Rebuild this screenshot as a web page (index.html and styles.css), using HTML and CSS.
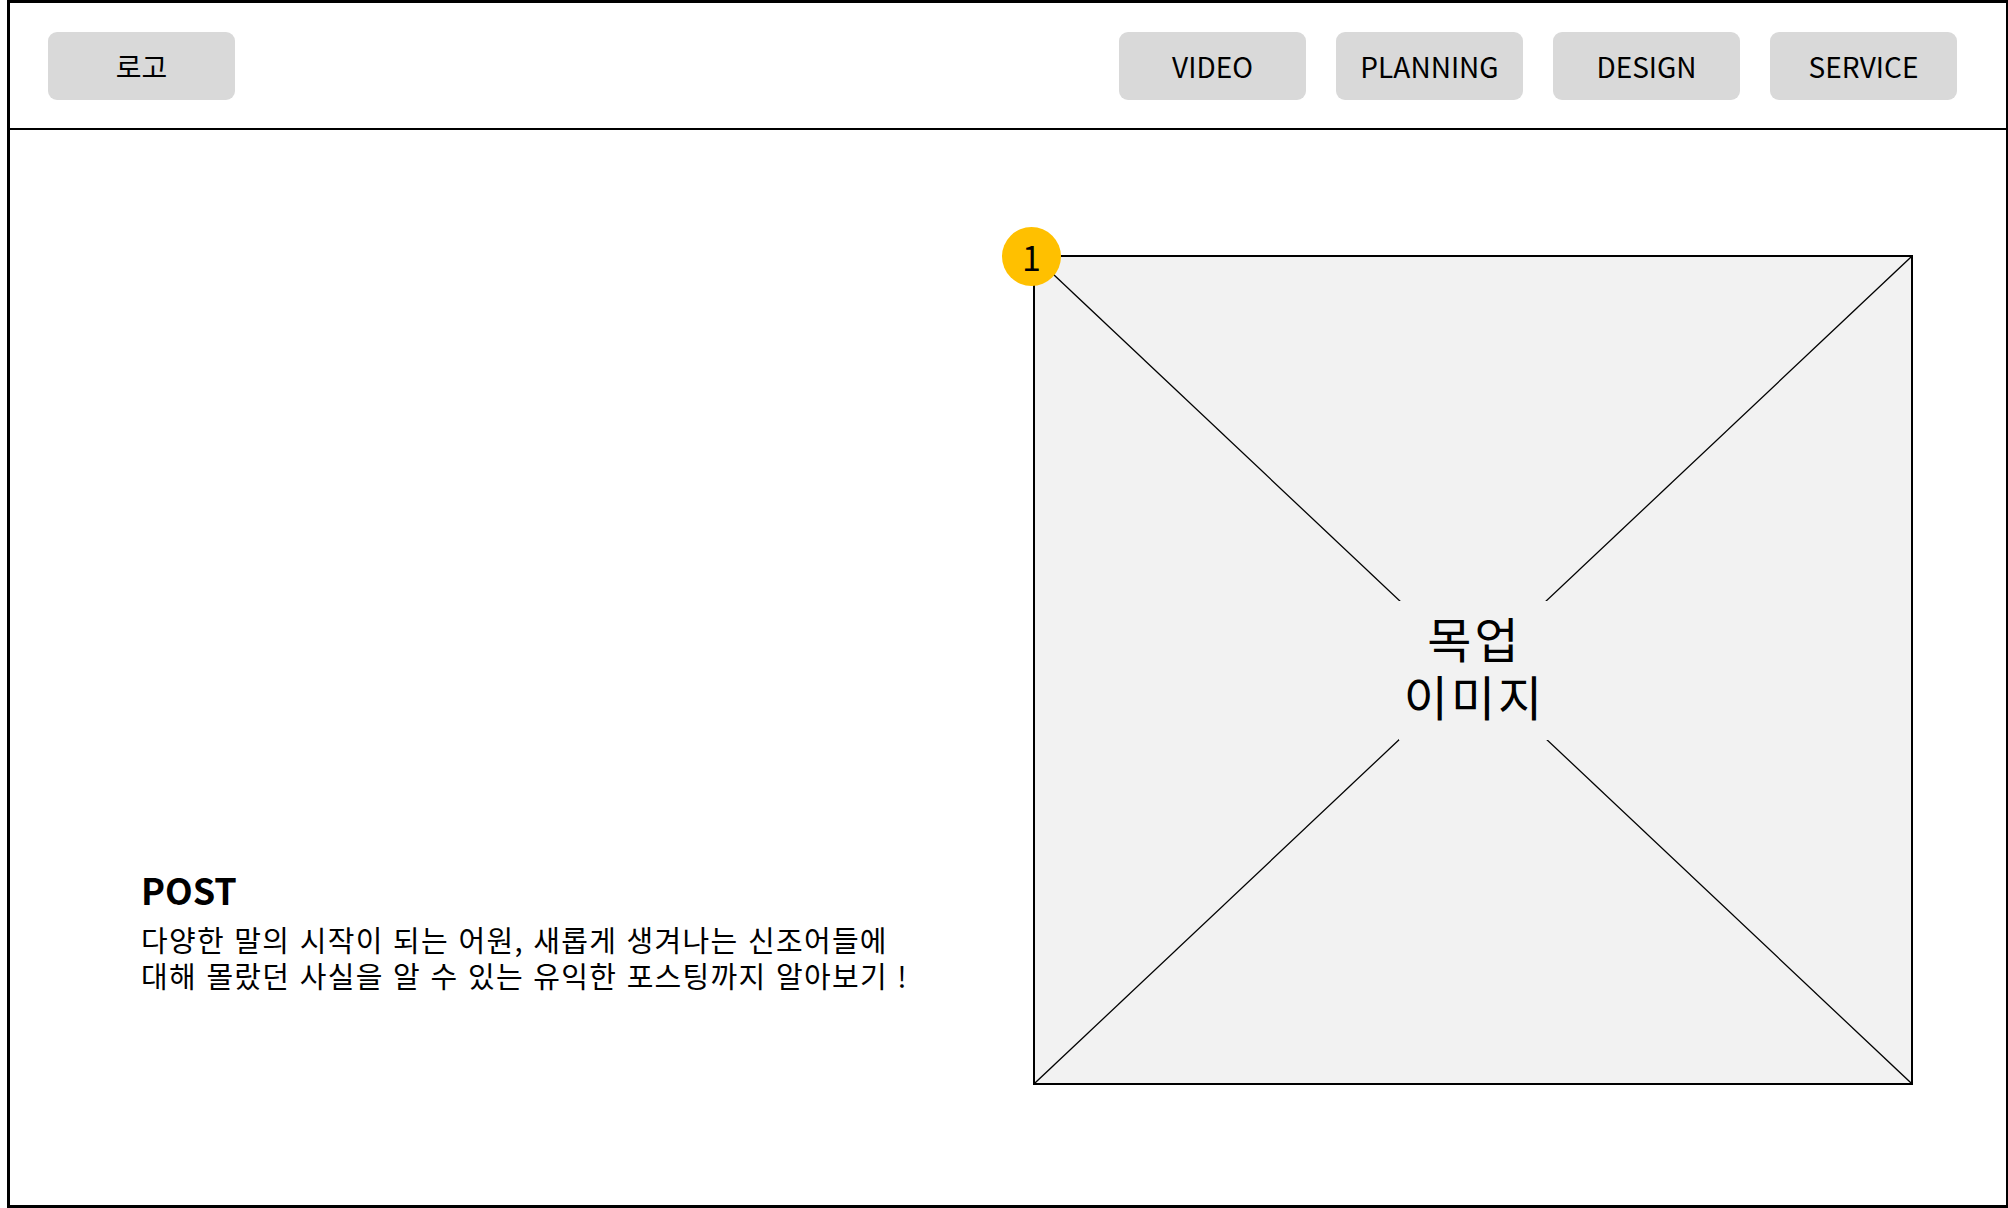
FILE: index.html
```html
<!DOCTYPE html>
<html lang="ko">
<head>
    <meta charset="UTF-8">
    <meta name="viewport" content="width=device-width, initial-scale=1.0">
    <title>POST</title>
    <link rel="stylesheet" href="styles.css">
</head>
<body>
    <div class="frame">
        <header class="header">
            <div class="btn logo">로고</div>
            <nav class="nav">
                <div class="btn">VIDEO</div>
                <div class="btn">PLANNING</div>
                <div class="btn">DESIGN</div>
                <div class="btn">SERVICE</div>
            </nav>
        </header>
        <main class="main">
            <section class="intro">
                <h2 class="intro-title">POST</h2>
                <p class="intro-text">다양한 말의 시작이 되는 어원, 새롭게 생겨나는 신조어들에<br>대해 몰랐던 사실을 알 수 있는 유익한 포스팅까지 알아보기 !</p>
            </section>
            <div class="mockup">
                <svg class="mockup-lines" viewBox="0 0 100 100" preserveAspectRatio="none">
                    <line x1="0" y1="0" x2="100" y2="100" vector-effect="non-scaling-stroke"/>
                    <line x1="100" y1="0" x2="0" y2="100" vector-effect="non-scaling-stroke"/>
                </svg>
                <div class="mockup-label">목업<br>이미지</div>
                <span class="badge">1</span>
            </div>
        </main>
    </div>
</body>
</html>
```

FILE: styles.css
```css
body {
    margin: 0;
    font-family: "Noto Sans CJK KR", "Noto Sans", sans-serif;
    color: #000;
    background: #fff;
}
.frame {
    margin-left: 7px;
    height: 1208px;
    box-sizing: border-box;
    border: 3px solid #000;
    border-right-width: 2px;
    display: flex;
    flex-direction: column;
}
.header {
    height: 127px;
    box-sizing: border-box;
    border-bottom: 2px solid #000;
    display: flex;
    align-items: center;
    justify-content: space-between;
    padding: 0 49px 0 38px;
}
.nav {
    display: flex;
    gap: 30px;
}
.btn {
    width: 187px;
    height: 68px;
    background: #d9d9d9;
    border-radius: 9px;
    display: flex;
    align-items: center;
    justify-content: center;
    font-size: 28px;
}
.main {
    flex: 1;
    display: flex;
    padding: 125px 93px 0 131px;
}
.intro {
    flex: 1;
    display: flex;
    flex-direction: column;
    justify-content: flex-end;
    padding-bottom: 212px;
}
.intro-title {
    margin: 0 0 6px;
    font-size: 36px;
    font-weight: bold;
}
.intro-text {
    margin: 0;
    font-size: 29px;
    line-height: 36px;
    letter-spacing: 1.3px;
}
.mockup {
    position: relative;
    width: 880px;
    height: 830px;
    box-sizing: border-box;
    border: 2px solid #000;
    background: #f2f2f2;
    display: flex;
    align-items: center;
    justify-content: center;
}
.mockup-lines {
    position: absolute;
    inset: 0;
    width: 100%;
    height: 100%;
}
.mockup-lines line {
    stroke: #000;
    stroke-width: 1.3;
}
.mockup-label {
    position: relative;
    width: 149px;
    height: 139px;
    box-sizing: border-box;
    padding: 0 0 8px 3px;
    background: #f2f2f2;
    display: flex;
    align-items: center;
    justify-content: center;
    text-align: center;
    font-size: 48px;
    line-height: 58px;
    letter-spacing: 3px;
}
.badge {
    position: absolute;
    left: -33px;
    top: -30px;
    width: 59px;
    height: 59px;
    border-radius: 50%;
    background: #ffc000;
    display: flex;
    align-items: center;
    justify-content: center;
    font-size: 34px;
}
```
